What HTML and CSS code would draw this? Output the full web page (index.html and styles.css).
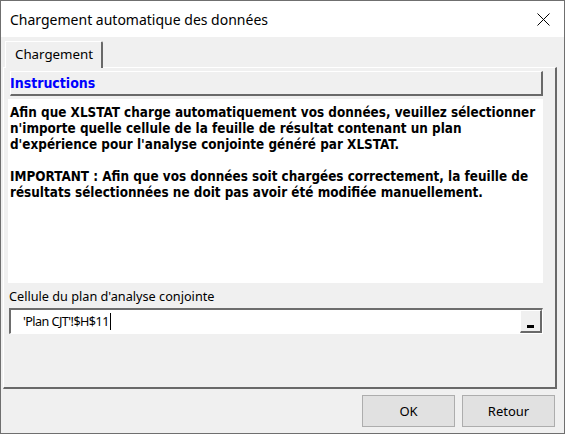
FILE: index.html
```html
<!DOCTYPE html>
<html lang="fr">
<head>
<meta charset="utf-8">
<title>Chargement automatique des données</title>
<link rel="stylesheet" href="styles.css">
</head>
<body>
<div class="window">
  <div class="titlebar">
    <span class="title">Chargement automatique des données</span>
    <svg class="close" width="13" height="13" viewBox="0 0 13 13"><path d="M0.5 0.5 L12.5 12.5 M12.5 0.5 L0.5 12.5" stroke="#000" stroke-width="1" fill="none"/></svg>
  </div>
  <div class="client">
    <div class="tabs">
      <div class="tab">Chargement</div>
    </div>
    <div class="panel">
      <div class="header">Instructions</div>
      <div class="textarea">
        <p>Afin que XLSTAT charge automatiquement vos données, veuillez sélectionner n'importe quelle cellule de la feuille de résultat contenant un plan d'expérience pour l'analyse conjointe généré par XLSTAT.</p>
        <p>IMPORTANT : Afin que vos données soit chargées correctement, la feuille de résultats sélectionnées ne doit pas avoir été modifiée manuellement.</p>
      </div>
      <div class="label">Cellule du plan d'analyse conjointe</div>
      <div class="input">
        <span class="value">'Plan CJT'!$H$11<span class="caret"></span></span>
        <span class="pick"><span class="pick-mark"></span></span>
      </div>
    </div>
    <div class="buttons">
      <div class="btn">OK</div>
      <div class="btn">Retour</div>
    </div>
  </div>
</div>
</body>
</html>
```
FILE: styles.css
```css
html, body {
  margin: 0;
  padding: 0;
  background: #f0f0f0;
}
.window {
  width: 565px;
  height: 434px;
  box-sizing: border-box;
  border: 1px solid #6f6f6f;
  display: flex;
  flex-direction: column;
  font-family: "Noto Sans", "Open Sans", sans-serif;
}
.titlebar {
  height: 36px;
  background: #ffffff;
  display: flex;
  align-items: center;
  justify-content: space-between;
  padding-left: 9px;
  padding-right: 14px;
}
.title {
  font-size: 14px;
  color: #000;
}
.close {
  display: block;
}
.client {
  flex: 1;
  background: #f0f0f0;
  padding: 4px 9px 6px 2px;
  display: flex;
  flex-direction: column;
}
.tabs {
  display: flex;
  height: 26px;
  padding-left: 2px;
  position: relative;
  z-index: 1;
}
.tab {
  width: 98px;
  box-sizing: border-box;
  border-left: 1px solid #ffffff;
  border-top: 1px solid #ffffff;
  border-right: 2px solid #696969;
  border-top-right-radius: 2px;
  background: #f0f0f0;
  font-size: 13.3px;
  padding-left: 9px;
  line-height: 24px;
  color: #000;
  height: 27px;
}
.panel {
  width: 554px;
  height: 322px;
  box-sizing: border-box;
  border-top: 1px solid #ffffff;
  border-left: 1px solid #ffffff;
  border-right: 2px solid #696969;
  border-bottom: 2px solid #696969;
  display: flex;
  flex-direction: column;
  padding-top: 3px;
}
.header {
  margin-left: 6px;
  width: 533px;
  height: 25px;
  box-sizing: border-box;
  border-top: 1px solid #ffffff;
  border-left: 1px solid #ffffff;
  border-right: 2px solid #696969;
  border-bottom: 2px solid #696969;
  color: #0000ff;
  font-family: "DejaVu Sans", sans-serif;
  font-stretch: condensed;
  font-weight: bold;
  font-size: 14px;
  line-height: 22px;
  text-indent: -1px;
}
.textarea {
  margin-top: 3px;
  margin-left: 4px;
  width: 535px;
  height: 184px;
  box-sizing: border-box;
  background: #ffffff;
  padding: 6px 4px 0 2px;
  font-family: "DejaVu Sans", sans-serif;
  font-stretch: condensed;
  font-weight: bold;
  font-size: 13.4px;
  line-height: 16px;
  color: #000;
}
.textarea p {
  margin: 0 0 16px 0;
}
.label {
  margin-left: 5px;
  height: 25px;
  box-sizing: border-box;
  padding-top: 5px;
  font-size: 12.7px;
  line-height: 17px;
  color: #000;
}
.input {
  margin-left: 5px;
  width: 534px;
  height: 26px;
  box-sizing: border-box;
  background: #ffffff;
  border-top: 2px solid #6d6d6d;
  border-left: 2px solid #6d6d6d;
  border-bottom: 1px solid #ffffff;
  border-right: 1px solid #ffffff;
  display: flex;
  align-items: stretch;
}
.value {
  flex: 1;
  padding-left: 12px;
  font-size: 12.6px;
  letter-spacing: -0.55px;
  line-height: 23px;
  color: #000;
  display: flex;
  align-items: center;
}
.caret {
  display: inline-block;
  width: 1px;
  height: 17px;
  background: #000;
  margin-left: 1px;
}
.pick {
  width: 22px;
  box-sizing: border-box;
  background: #f0f0f0;
  border-top: 1px solid #ffffff;
  border-left: 1px solid #ffffff;
  border-right: 2px solid #696969;
  border-bottom: 2px solid #696969;
  display: flex;
  align-items: flex-end;
  justify-content: center;
  padding-bottom: 3px;
}
.pick-mark {
  width: 7px;
  height: 3px;
  background: #000;
}
.buttons {
  margin-top: 6px;
  display: flex;
  justify-content: flex-end;
  gap: 7px;
}
.btn {
  width: 93px;
  height: 32px;
  box-sizing: border-box;
  background: #e1e1e1;
  border: 1px solid #adadad;
  display: flex;
  align-items: center;
  justify-content: center;
  font-size: 13px;
  color: #000;
}
```
